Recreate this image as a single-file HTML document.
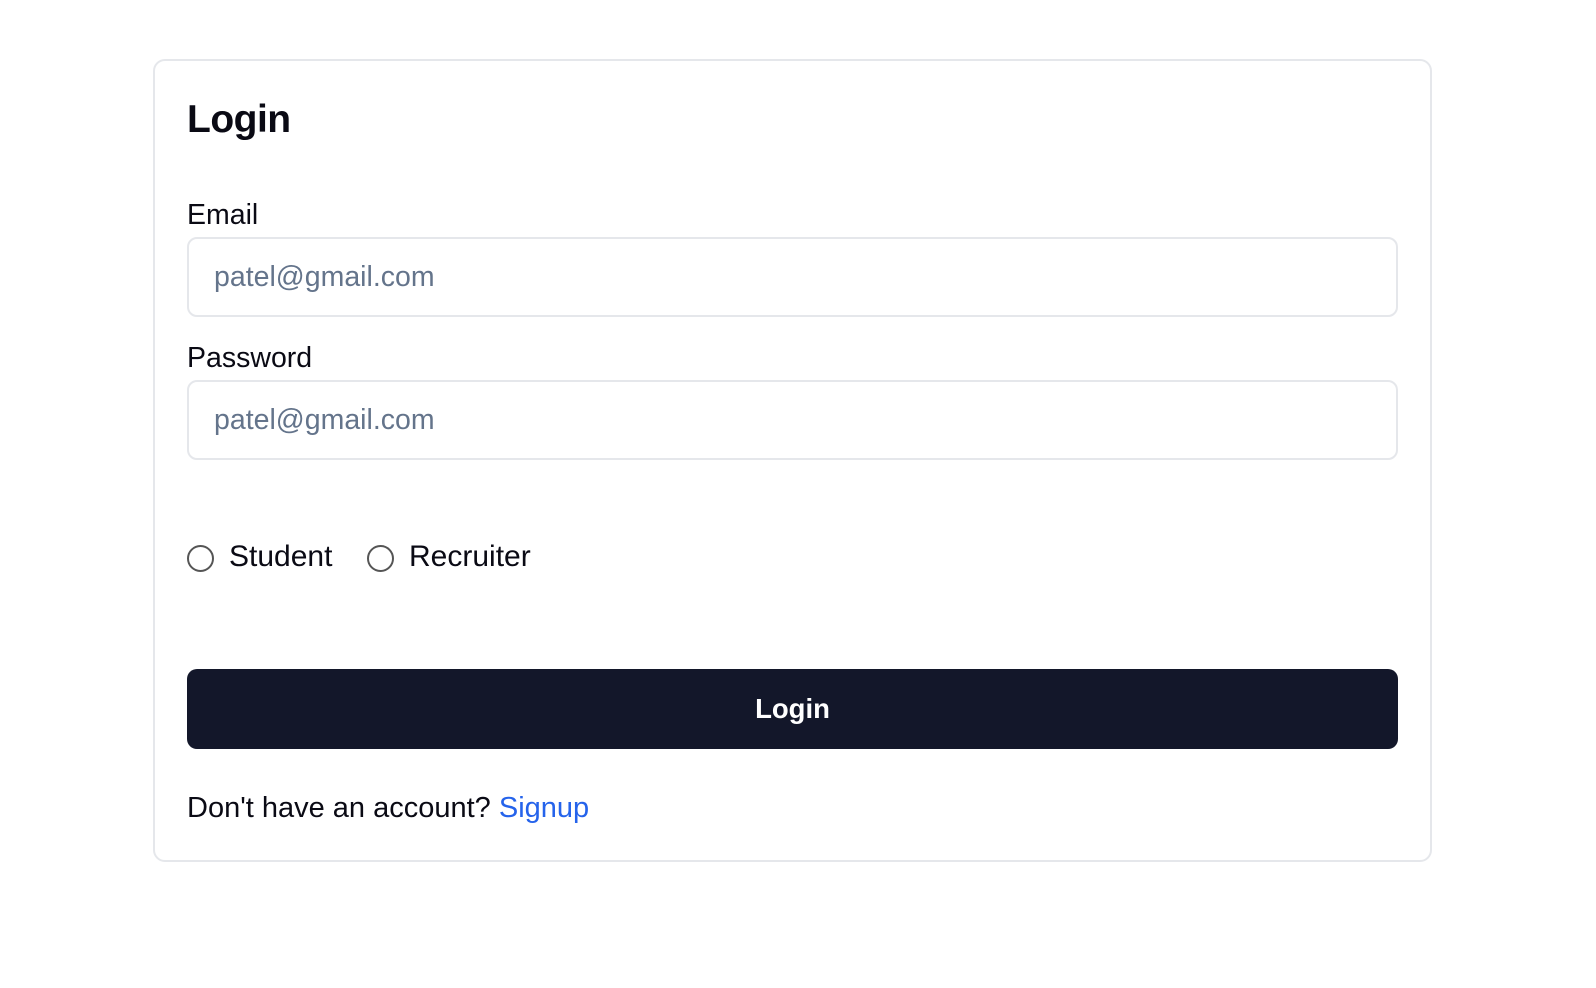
<!DOCTYPE html>
<html><head><style>
body{margin:0;width:1596px;height:988px;background:#fff;font-family:"Liberation Sans",sans-serif;color:#0a0a14}
.card{position:absolute;left:153px;top:59px;width:1279px;height:803px;border:2px solid #e5e7eb;border-radius:12px;box-sizing:border-box}
.abs{position:absolute}
h1{position:absolute;left:187px;top:98px;margin:0;font-size:39px;font-weight:bold;letter-spacing:-0.5px}
.lbl{position:absolute;left:187px;font-size:28.5px;font-weight:500}
.inp{position:absolute;left:187px;width:1211px;height:80px;border:2px solid #e5e7eb;border-radius:10px;box-sizing:border-box;font-size:28.5px;color:#64748b;padding-left:25px;line-height:76px}
.radio{position:absolute;width:23px;height:23px;border:2px solid #555;border-radius:50%;top:545px}
.rl{position:absolute;top:540px;font-size:30px;font-weight:500}
.btn{position:absolute;left:187px;top:669px;width:1211px;height:80px;background:#13172a;border-radius:10px;color:#fff;font-size:27.5px;font-weight:bold;text-align:center;line-height:80px}
</style></head><body>
<div class="card"></div>
<h1>Login</h1>
<div class="lbl" style="top:199px">Email</div>
<div class="inp" style="top:237px">patel@gmail.com</div>
<div class="lbl" style="top:342px">Password</div>
<div class="inp" style="top:380px">patel@gmail.com</div>
<div class="radio" style="left:187px"></div><div class="rl" style="left:229px">Student</div>
<div class="radio" style="left:367px"></div><div class="rl" style="left:409px">Recruiter</div>
<div class="btn">Login</div>
<div class="abs" style="left:187px;top:792px;font-size:29px">Don't have an account? <span style="color:#2563eb">Signup</span></div>
</body></html>
